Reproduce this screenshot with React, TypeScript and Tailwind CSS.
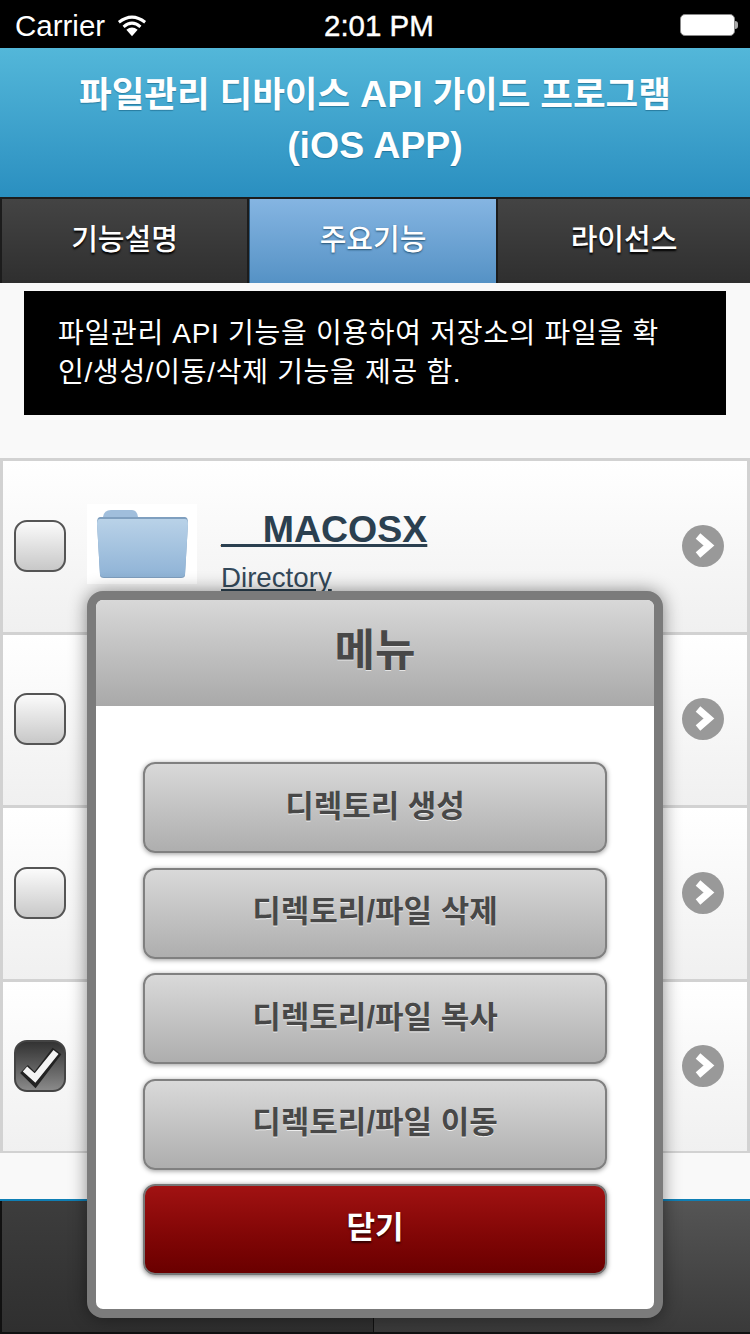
import React from "react";

const FONT = "font-['Liberation_Sans','Noto_Sans_CJK_KR',sans-serif]";

const FolderIcon = () => (
  <svg width="110" height="80" viewBox="0 0 110 80" className="bg-white">
    <defs>
      <linearGradient id="folderBody" x1="0" y1="0" x2="0" y2="1">
        <stop offset="0" stopColor="#b9d2e8" />
        <stop offset="1" stopColor="#8fb3d6" />
      </linearGradient>
    </defs>
    <path d="M16 13 Q17 6 24 6 H45 Q50 6 51 13 Z" fill="#a0bedc" />
    <path d="M13 13 H98 Q101 13 101 19 L98 71 Q98 74 94 74 H17 Q13 74 13 71 L10 19 Q10 13 13 13 Z" fill="#7f9fbf" />
    <path d="M13 15 H98 Q101 15 101 20 L98 70 Q98 73 94 73 H17 Q13 73 13 70 L10 20 Q10 15 13 15 Z" fill="url(#folderBody)" />
  </svg>
);

const Checkbox = ({ checked }: { checked?: boolean }) =>
  checked ? (
    <div className="w-[52px] h-[52px] shrink-0 rounded-[13px] border-2 border-[#444] bg-gradient-to-b from-[#333] to-[#8a8a8a] flex items-center justify-center">
      <svg width="46" height="46" viewBox="0 0 46 46">
        <path d="M7 26 L18 37 L40 8" fill="none" stroke="#222" strokeWidth="11" />
        <path d="M8 26 L18 35 L39 9" fill="none" stroke="#f4f4f4" strokeWidth="6.5" />
      </svg>
    </div>
  ) : (
    <div className="w-[52px] h-[52px] shrink-0 rounded-[13px] border-2 border-[#555] bg-gradient-to-b from-[#fbfbfb] to-[#c8c8c8]" />
  );

const Chevron = () => (
  <svg width="42" height="42" viewBox="0 0 42 42" className="shrink-0">
    <circle cx="21" cy="21" r="21" fill="#999999" />
    <path d="M16 11 L27 20.5 L16 30" fill="none" stroke="#ffffff" strokeWidth="7" />
  </svg>
);

const Row = ({ checked, name, kind }: { checked?: boolean; name?: string; kind?: string }) => (
  <div className="h-[173.5px] shrink-0 border-x-[3px] border-t-[3px] border-[#d2d2d2] bg-gradient-to-b from-white to-[#f0f0f0] flex items-center pl-[11px] pr-[23px] pb-[1px]">
    <Checkbox checked={checked} />
    {name ? (
      <>
        <div className="ml-[21px] shrink-0 -mt-[3px]">
          <FolderIcon />
        </div>
        <div className="ml-6 flex-1 text-[#2b4050] underline self-start pt-[46px]">
          <div className="text-[37.5px] leading-[44px] font-bold">{name}</div>
          <div className="text-[27.7px] leading-[32px] mt-[11px] text-[#34495a]">{kind}</div>
        </div>
      </>
    ) : (
      <div className="flex-1" />
    )}
    <Chevron />
  </div>
);

const MenuButton = ({ label }: { label: string }) => (
  <div className="h-[91px] rounded-[12px] border-2 border-[#808080] bg-gradient-to-b from-[#d9d9d9] to-[#aeaeae] shadow-[0_1px_5px_rgba(0,0,0,0.4)] flex items-center justify-center text-[31px] font-bold text-[#484848] [text-shadow:0_1px_0_#eee] pb-[1px]">
    {label}
  </div>
);

export default function App() {
  return (
    <div className={`relative w-[750px] h-[1334px] overflow-hidden flex flex-col bg-[#f9f9f9] ${FONT}`}>
      {/* status bar */}
      <div className="h-12 shrink-0 bg-black text-white flex items-center justify-between pl-[15px] pr-[12px] pt-[4px] relative">
        <div className="flex items-center gap-[12px]">
          <span className="text-[29.5px] leading-none">Carrier</span>
          <svg width="30" height="24" viewBox="0 0 32 24">
            <path d="M2 8 Q16 -3 30 8" fill="none" stroke="#fff" strokeWidth="3.2" />
            <path d="M7 13 Q16 5 25 13" fill="none" stroke="#fff" strokeWidth="3.2" />
            <path d="M10 16 Q16 11 22 16 L16 23 Z" fill="#fff" />
          </svg>
        </div>
        <span className="absolute left-[324px] text-[29.5px] leading-none font-medium [-webkit-text-stroke:0.4px_white]">2:01 PM</span>
        <div className="flex items-center -mt-[3px]">
          <div className="w-[55px] h-[22px] rounded-[5px] bg-white border border-[#888]" />
          <div className="w-[3px] h-[8px] bg-[#aaa] rounded-r-sm" />
        </div>
      </div>

      {/* title */}
      <div className="h-[149px] shrink-0 bg-gradient-to-b from-[#53b7d9] to-[#2a8fc0] flex items-center justify-center text-center text-white text-[35.5px] leading-[50px] font-bold pb-[5px] [text-shadow:0_1px_1px_rgba(0,60,90,0.4)]">
        <div>
          파일관리 디바이스 <span className="text-[37.5px]">API</span> 가이드 프로그램
          <br />
          <span className="text-[37.5px]">(iOS APP)</span>
        </div>
      </div>

      {/* tabs */}
      <div className="h-[86px] shrink-0 flex border-t-2 border-[#1c1c1c] text-[29px] font-medium text-white [text-shadow:0_2px_2px_#000]">
        <div className="w-[249px] border-x-2 border-[#1c1c1c] bg-gradient-to-b from-[#444] to-[#2f2f2f] flex items-center justify-center">기능설명</div>
        <div className="w-[247px] bg-gradient-to-b from-[#85b5e2] to-[#5592c5] flex items-center justify-center border-l border-[#2c5a80] [text-shadow:0_1px_2px_#24506f]">주요기능</div>
        <div className="flex-1 border-l-2 border-[#1c1c1c] bg-gradient-to-b from-[#444] to-[#2f2f2f] flex items-center justify-center">라이선스</div>
      </div>

      {/* description */}
      <div className="mx-6 mt-2 h-[124px] shrink-0 bg-black text-white text-[28px] leading-[39px] tracking-[0.7px] pl-[34px] pr-[60px] pt-[23px] break-all">
        파일관리 API 기능을 이용하여 저장소의 파일을 확인/생성/이동/삭제 기능을 제공 함.
      </div>

      {/* file list */}
      <div className="mt-[43px] h-[695px] shrink-0 flex flex-col overflow-hidden border-b-2 border-[#d2d2d2]">
        <Row name="__MACOSX" kind="Directory" />
        <Row />
        <Row />
        <Row checked />
      </div>

      {/* footer */}
      <div className="mt-auto h-[135px] shrink-0 flex border-t-2 border-[#0f7fb5] border-b-2 border-b-[#111]">
        <div className="w-[374px] border-l-2 border-r border-[#111] bg-gradient-to-b from-[#3d3d3d] to-[#2f2f2f]" />
        <div className="flex-1 bg-gradient-to-b from-[#555] to-[#3a3a3a]" />
      </div>

      {/* menu popup */}
      <div className="absolute left-[87px] top-[591px] w-[576px] h-[727px] rounded-[16px] border-[9px] border-[#7b7b7b] bg-white shadow-[0_0_18px_rgba(0,0,0,0.45)] flex flex-col overflow-hidden">
        <div className="h-[106px] shrink-0 bg-gradient-to-b from-[#d8d8d8] to-[#a9a9a9] flex items-center justify-center text-[44px] font-bold text-[#484848] pb-[4px] [text-shadow:0_1px_0_#e5e5e5]">
          메뉴
        </div>
        <div className="flex-1 flex flex-col gap-[14.5px] px-[47px] pt-[56px]">
          <MenuButton label="디렉토리 생성" />
          <MenuButton label="디렉토리/파일 삭제" />
          <MenuButton label="디렉토리/파일 복사" />
          <MenuButton label="디렉토리/파일 이동" />
          <div className="h-[91px] rounded-[12px] border-2 border-[#777] bg-gradient-to-b from-[#a11212] to-[#6a0000] shadow-[0_1px_5px_rgba(0,0,0,0.5)] flex items-center justify-center text-[31px] font-bold text-white pb-[3px] [text-shadow:0_2px_2px_#300]">
            닫기
          </div>
        </div>
      </div>
    </div>
  );
}
